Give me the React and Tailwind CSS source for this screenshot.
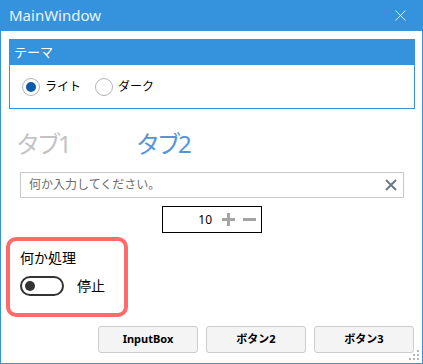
import React, { useState } from 'react';

const FONT = { fontFamily: '"Noto Sans", "Noto Sans CJK JP", sans-serif' };

function Radio({ checked, label, onClick }) {
  return (
    <button onClick={onClick} className="flex items-center gap-[5px]">
      <span className="w-[18px] h-[18px] rounded-full border border-[#b4b4b4] bg-white flex items-center justify-center">
        {checked && <span className="w-[10px] h-[10px] rounded-full bg-[#0b5cab]" />}
      </span>
      <span className="text-[12px] text-black leading-none">{label}</span>
    </button>
  );
}

function Grip() {
  const dots = [[8, 0], [4, 4], [8, 4], [0, 8], [4, 8], [8, 8]];
  return (
    <svg width="11" height="11" className="absolute right-[2px] bottom-[2px]">
      {dots.map(([x, y], i) => (
        <rect key={i} x={x} y={y} width="2" height="2" fill="#b8b8b8" />
      ))}
    </svg>
  );
}

export default function App() {
  const [theme, setTheme] = useState('light');
  const [tab, setTab] = useState(2);
  const [text, setText] = useState('');
  const [num, setNum] = useState(10);
  const [running, setRunning] = useState(false);

  return (
    <div style={FONT} className="relative w-[423px] h-[364px] bg-white border border-[#3592dc] border-t-0 flex flex-col">
      {/* Title bar */}
      <div className="h-[31px] bg-[#3592dc] flex items-center justify-between pl-[9px] pr-[17px] -mx-px">
        <span className="text-[15px] text-[#eaf4ff] leading-none">MainWindow</span>
        <svg width="11" height="11" viewBox="0 0 11 11">
          <path d="M0.5 0.5 L10.5 10.5 M10.5 0.5 L0.5 10.5" stroke="#eaf4ff" strokeWidth="1" />
        </svg>
      </div>

      {/* Theme group */}
      <div className="mt-[8px] ml-[8px] w-[406px] h-[70px] border border-[#3592dc] flex flex-col">
        <div className="h-[25px] bg-[#3592dc] flex items-center pl-[4px]">
          <span className="text-[13px] text-white leading-none">テーマ</span>
        </div>
        <div className="flex-1 flex items-center pl-[12px] gap-[14px]">
          <Radio checked={theme === 'light'} label="ライト" onClick={() => setTheme('light')} />
          <Radio checked={theme === 'dark'} label="ダーク" onClick={() => setTheme('dark')} />
        </div>
      </div>

      {/* Tabs */}
      <div className="mt-[20px] ml-[15px] flex items-center h-[30px]">
        <button onClick={() => setTab(1)} className={`w-[120px] text-left text-[24px] tracking-[-3px] leading-none ${tab === 1 ? 'text-[#5594d8]' : 'text-[#c3c3c3]'}`}>タブ1</button>
        <button onClick={() => setTab(2)} className={`text-[24px] tracking-[-3px] leading-none ${tab === 2 ? 'text-[#5594d8]' : 'text-[#c3c3c3]'}`}>タブ2</button>
      </div>

      {/* Text box */}
      <div className="mt-[13px] ml-[19px] w-[384px] h-[26px] border border-[#c8c8c8] flex items-center pl-[8px] pr-[5px]">
        <input
          value={text}
          onChange={e => setText(e.target.value)}
          placeholder="何か入力してください。"
          className="flex-1 text-[12px] text-black placeholder:text-[#6e6e6e] outline-none bg-transparent"
        />
        <button onClick={() => setText('')} className="w-[14px] h-[14px] flex items-center justify-center">
          <svg width="12" height="12" viewBox="0 0 12 12">
            <path d="M1 1 L11 11 M11 1 L1 11" stroke="#6b7886" strokeWidth="2" />
          </svg>
        </button>
      </div>

      {/* Numeric */}
      <div className="mt-[8px] ml-[161px] w-[100px] h-[27px] border border-black flex items-center justify-end pr-[4px]">
        <span className="text-[12px] text-black mr-[8px]">{num}</span>
        <button onClick={() => setNum(n => n + 1)} className="w-[16px] h-[16px] flex items-center justify-center mr-[5px]">
          <svg width="15" height="15" viewBox="0 0 15 15">
            <path d="M7.5 1 V14 M1 7.5 H14" stroke="#a3a3a3" strokeWidth="3" />
          </svg>
        </button>
        <button onClick={() => setNum(n => n - 1)} className="w-[16px] h-[16px] flex items-center justify-center">
          <svg width="15" height="15" viewBox="0 0 15 15">
            <path d="M1 7.5 H14" stroke="#a3a3a3" strokeWidth="3" />
          </svg>
        </button>
      </div>

      {/* Process box */}
      <div className="mt-[4px] ml-[5px] w-[122px] h-[80px] border-[4px] border-[#ff6b6b] rounded-[10px] pl-[10px] pt-[10px]">
        <div className="text-[14px] text-black leading-none">何か処理</div>
        <div className="mt-[11px] flex items-center">
          <button
            onClick={() => setRunning(r => !r)}
            className={`w-[44px] h-[20px] rounded-full border-2 border-[#333] flex items-center px-[3px] ${running ? 'justify-end' : 'justify-start'}`}
          >
            <span className="w-[10px] h-[10px] rounded-full bg-[#333]" />
          </button>
          <span className="ml-[13px] text-[14px] text-black leading-none">{running ? '実行中' : '停止'}</span>
        </div>
      </div>

      {/* Buttons */}
      <div className="mt-[9px] ml-[97px] flex gap-[8px]">
        {['InputBox', 'ボタン2', 'ボタン3'].map(b => (
          <button key={b} className="w-[100px] h-[27px] bg-[#f4f4f4] border border-[#cccccc] rounded-[3px] text-[11px] font-bold text-black">
            {b}
          </button>
        ))}
      </div>

      <Grip />
    </div>
  );
}
